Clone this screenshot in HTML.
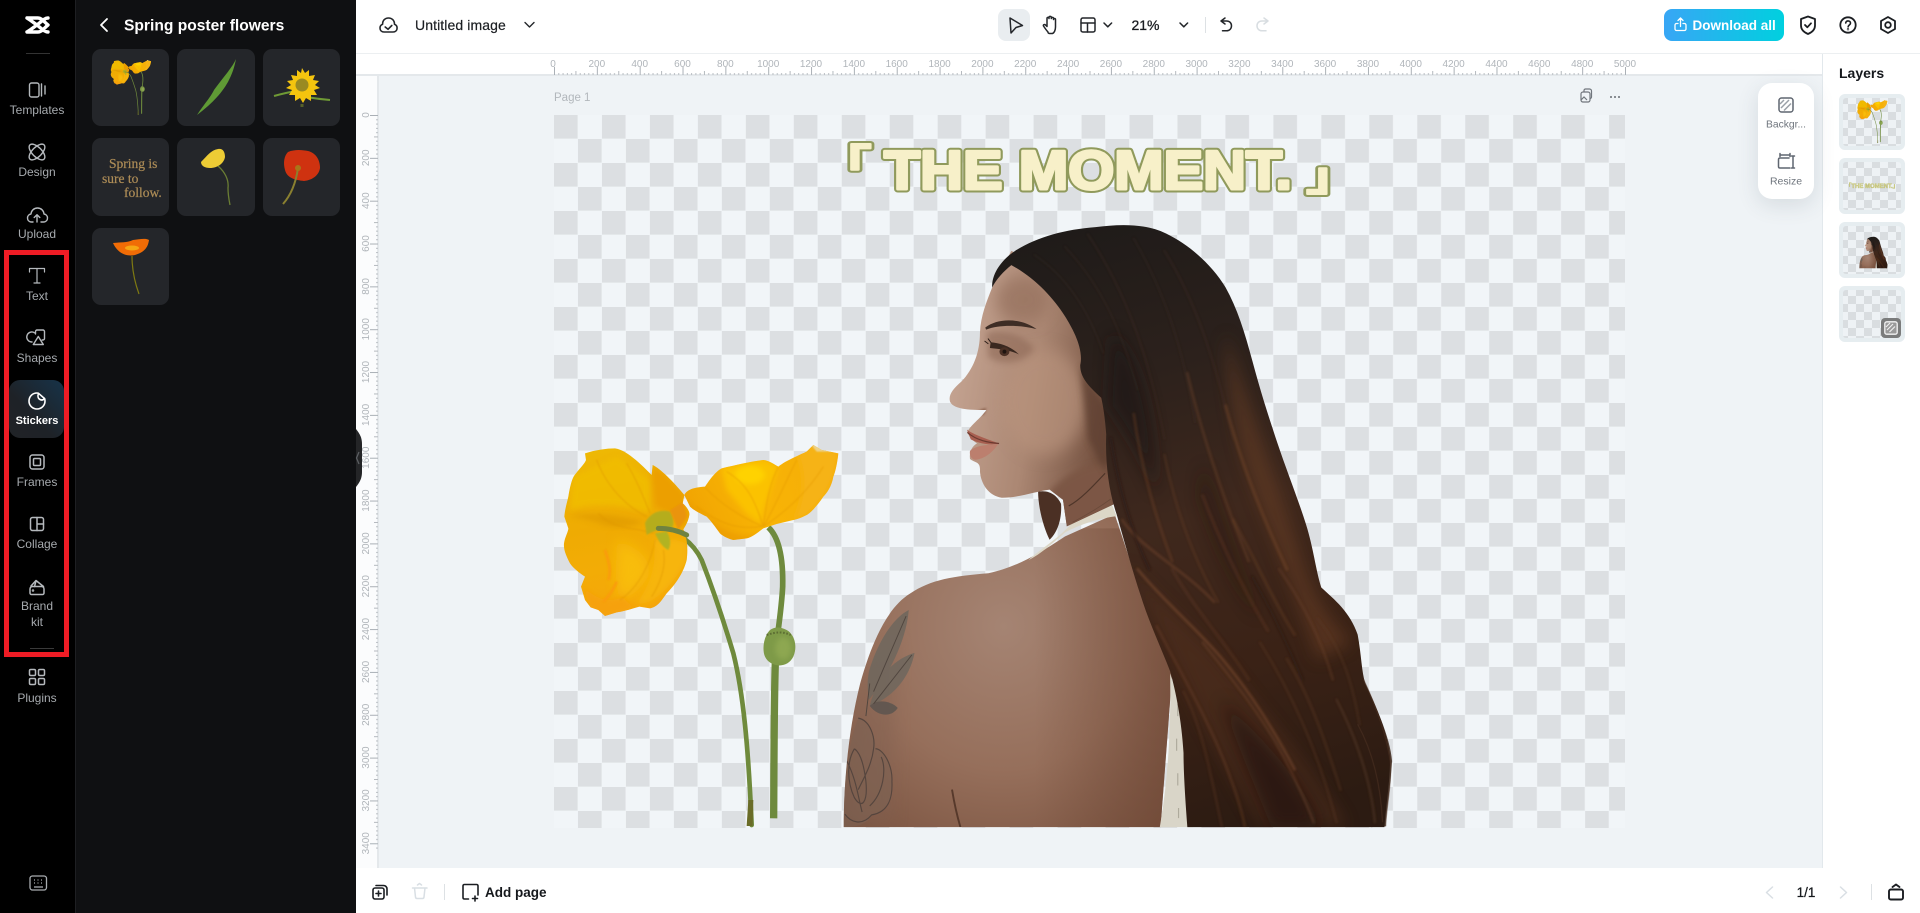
<!DOCTYPE html>
<html lang="en"><head><meta charset="utf-8"><title>Untitled image</title>
<style>
html,body{margin:0;padding:0;width:1920px;height:913px;overflow:hidden;background:#fff;font-family:"Liberation Sans","Noto Sans CJK SC",sans-serif}
.a{position:absolute}
svg text{font-family:"Liberation Sans","Noto Sans CJK SC",sans-serif}
#card{left:1758px;top:83px;width:56px;height:116px;background:#fff;border-radius:14px;box-shadow:0 6px 22px rgba(60,75,90,.14)}
</style></head><body>
<div class="a" style="left:0;top:0;width:76px;height:913px;background:#000"></div>
<div class="a" style="left:75px;top:0;width:281px;height:913px;background:#0f1012;border-left:1px solid #1e1f22;box-sizing:border-box"></div>
<div class="a" style="left:356px;top:0;width:1564px;height:53px;background:#fff;border-bottom:1px solid #eceff1"></div>
<div class="a" style="left:356px;top:54px;width:1466px;height:22px;background:#fff;border-bottom:2px solid #e4e8eb;box-sizing:border-box"></div>
<div class="a" style="left:356px;top:76px;width:23px;height:792px;background:#fbfcfd;border-right:2px solid #e4e8eb;box-sizing:border-box"></div>
<div class="a" style="left:379px;top:76px;width:1443px;height:792px;background:#eff3f6"></div>
<div class="a" style="left:1822px;top:54px;width:98px;height:814px;background:#fff;border-left:1px solid #e2e8ec;box-sizing:border-box"></div>
<div class="a" style="left:356px;top:868px;width:1564px;height:45px;background:#fff"></div>

<svg class="a" style="left:0;top:0" width="1920" height="913" viewBox="0 0 1920 913" xmlns="http://www.w3.org/2000/svg">
<defs>
<pattern id="chk" patternUnits="userSpaceOnUse" x="554" y="115" width="47.96" height="48"><rect width="48" height="48" fill="#f1f5f8"/><rect width="23.6" height="23.6" fill="#dcdfe2"/><rect x="23.98" y="24" width="23.6" height="23.6" fill="#dcdfe2"/></pattern>
<pattern id="chk2" patternUnits="userSpaceOnUse" width="16" height="16"><rect width="16" height="16" fill="#eef2f5"/><rect width="8" height="8" fill="#d9dde0"/><rect x="8" y="8" width="8" height="8" fill="#d9dde0"/></pattern>
<pattern id="tickH" patternUnits="userSpaceOnUse" x="554" y="0" width="42.84" height="76">
<rect x="0" y="67" width="1" height="8" fill="#aab0b6"/><rect x="21.42" y="71" width="1" height="4" fill="#b4b9be"/>
<rect x="4.28" y="73" width="1" height="2" fill="#b9bec3"/><rect x="8.57" y="73" width="1" height="2" fill="#b9bec3"/><rect x="12.85" y="73" width="1" height="2" fill="#b9bec3"/><rect x="17.14" y="73" width="1" height="2" fill="#b9bec3"/><rect x="25.7" y="73" width="1" height="2" fill="#b9bec3"/><rect x="29.99" y="73" width="1" height="2" fill="#b9bec3"/><rect x="34.27" y="73" width="1" height="2" fill="#b9bec3"/><rect x="38.56" y="73" width="1" height="2" fill="#b9bec3"/></pattern>
<pattern id="tickV" patternUnits="userSpaceOnUse" x="0" y="115" width="379" height="42.84">
<rect y="0" x="370" width="8" height="1" fill="#aab0b6"/><rect y="21.42" x="374" width="4" height="1" fill="#b4b9be"/>
<rect y="4.28" x="376" width="2" height="1" fill="#b9bec3"/><rect y="8.57" x="376" width="2" height="1" fill="#b9bec3"/><rect y="12.85" x="376" width="2" height="1" fill="#b9bec3"/><rect y="17.14" x="376" width="2" height="1" fill="#b9bec3"/><rect y="25.7" x="376" width="2" height="1" fill="#b9bec3"/><rect y="29.99" x="376" width="2" height="1" fill="#b9bec3"/><rect y="34.27" x="376" width="2" height="1" fill="#b9bec3"/><rect y="38.56" x="376" width="2" height="1" fill="#b9bec3"/></pattern>
<linearGradient id="dl" x1="0" x2="1" y1="0" y2="0"><stop offset="0" stop-color="#38a6f5"/><stop offset="1" stop-color="#00d0df"/></linearGradient>
<linearGradient id="act" x1="1" y1="0" x2="0" y2="1"><stop offset="0" stop-color="#173349"/><stop offset=".6" stop-color="#1e2227"/><stop offset="1" stop-color="#212327"/></linearGradient>
<linearGradient id="fL" gradientUnits="userSpaceOnUse" x1="760" y1="150" x2="860" y2="640"><stop offset="0" stop-color="#eeb804"/><stop offset=".45" stop-color="#efab03"/><stop offset=".7" stop-color="#f3ac06"/><stop offset="1" stop-color="#f5a50a"/></linearGradient>
<linearGradient id="fR" gradientUnits="userSpaceOnUse" x1="1010" y1="380" x2="1460" y2="170"><stop offset="0" stop-color="#f0a202"/><stop offset=".45" stop-color="#f8b404"/><stop offset="1" stop-color="#f5ad0a"/></linearGradient>
<linearGradient id="hairG" gradientUnits="userSpaceOnUse" x1="700" y1="40" x2="1100" y2="1512"><stop offset="0" stop-color="#1f1b19"/><stop offset=".25" stop-color="#2c211c"/><stop offset=".5" stop-color="#3f281d"/><stop offset=".75" stop-color="#3a2216"/><stop offset="1" stop-color="#2c1b12"/></linearGradient>
<radialGradient id="backG" gradientUnits="userSpaceOnUse" cx="480" cy="1020" r="640"><stop offset="0" stop-color="#a58473"/><stop offset=".55" stop-color="#966f5b"/><stop offset="1" stop-color="#7a5340"/></radialGradient>
<linearGradient id="backS" gradientUnits="userSpaceOnUse" x1="560" y1="0" x2="920" y2="0"><stop offset="0" stop-color="#6d4634" stop-opacity="0"/><stop offset="1" stop-color="#6d4634" stop-opacity=".6"/></linearGradient>
<linearGradient id="faceG" gradientUnits="userSpaceOnUse" x1="340" y1="450" x2="760" y2="520"><stop offset="0" stop-color="#c3a290"/><stop offset=".5" stop-color="#ab8773"/><stop offset="1" stop-color="#6f4c3b"/></linearGradient>
<path id="hp" d="M450 190C448 160 470 125 510 100C570 65 640 48 720 42C780 35 850 32 905 58C965 85 1025 135 1060 190C1090 240 1110 300 1130 370C1150 440 1170 500 1195 570C1220 640 1250 710 1270 770C1290 830 1295 880 1310 925C1345 955 1385 985 1405 1040C1415 1090 1415 1130 1425 1160C1455 1220 1480 1270 1490 1340C1490 1400 1480 1450 1475 1512L960 1512C955 1450 950 1380 950 1330C945 1250 930 1180 915 1130C890 1070 860 1010 840 950C815 880 795 810 775 745C755 690 745 620 748 550C745 510 740 480 735 460C700 430 680 410 680 380C690 340 660 290 640 260C610 215 560 165 500 135C480 150 460 170 450 190Z"/>
<clipPath id="hairClip"><use href="#hp"/></clipPath>
<path id="fp" d="M450 190C435 225 420 260 418 300C418 350 400 390 370 420C345 440 335 455 340 470C350 490 400 490 435 490C420 510 390 530 385 545C395 565 410 570 410 572C395 580 390 595 392 610C405 620 420 615 418 640C420 670 440 700 475 705C520 705 560 690 600 685L635 710L645 775L770 720L770 620L790 460L730 300L630 160L500 100Z"/>
<clipPath id="faceClip"><use href="#fp"/></clipPath>
<path id="bp" d="M62 1512C62 1400 75 1270 105 1160C135 1060 175 975 235 940C290 905 350 897 440 890C510 875 560 850 640 800L770 745L860 1000L920 1140L890 1512Z"/>
<clipPath id="backClip"><use href="#bp"/></clipPath>
<path id="flp" d="M705 160C735 150 770 145 795 145C830 150 870 190 905 225L908 195C930 205 970 245 1003 285L998 310C1010 320 1020 335 1018 345C1015 365 1005 380 1000 388C1012 410 1014 450 1010 480C1000 520 975 555 950 580C935 600 925 620 900 625L868 620C850 625 820 635 800 637L765 648L745 630L722 622L705 600L693 560L705 530C690 520 670 505 660 490C650 470 640 450 642 430C645 410 655 395 655 385L643 350C645 325 652 305 655 290C660 260 665 240 672 228C685 210 705 190 708 180Z"/>
<clipPath id="flc"><use href="#flp"/></clipPath>
<path id="frp" d="M1003 285C1010 270 1030 262 1065 260C1075 245 1095 215 1115 205C1160 195 1200 185 1240 180C1260 182 1275 195 1285 200C1310 180 1350 165 1370 155L1390 135L1415 150L1465 160C1462 190 1455 220 1450 230C1445 260 1430 280 1420 290C1400 320 1380 340 1370 345C1350 355 1340 358 1330 360L1280 372L1240 385C1220 400 1205 412 1190 415L1150 420C1130 415 1115 405 1110 400C1095 380 1085 365 1070 350C1050 340 1030 330 1020 320Z"/>
<clipPath id="frc"><use href="#frp"/></clipPath>
<filter id="b20" x="-30%" y="-30%" width="160%" height="160%"><feGaussianBlur stdDeviation="20"/></filter>
<filter id="b8" x="-30%" y="-30%" width="160%" height="160%"><feGaussianBlur stdDeviation="8"/></filter>
<filter id="b3" x="-20%" y="-20%" width="140%" height="140%"><feGaussianBlur stdDeviation="2.5"/></filter>

<g id="woman">
<path d="M570 690C600 685 620 700 630 720C632 750 625 785 600 808C585 780 570 730 570 690Z" fill="#4b3024"/>
<use href="#bp" fill="url(#backG)"/>
<g clip-path="url(#backClip)">
<path d="M62 1512C62 1400 75 1270 105 1160L200 1040L190 1512Z" fill="#806252" opacity=".35" filter="url(#b20)"/>
<rect x="560" y="780" width="360" height="740" fill="url(#backS)"/>
<path d="M345 1420C352 1460 360 1490 367 1512" stroke="#4a2e22" stroke-width="5" fill="none" opacity=".8"/>
<g opacity=".9">
<path d="M232 980C190 1000 150 1060 128 1130C122 1160 125 1180 128 1200C175 1145 225 1060 232 980Z" fill="#71685e"/>
<path d="M247 1085C195 1100 150 1140 130 1215C190 1195 235 1145 247 1085Z" fill="#71685e"/>
<path d="M130 1215C150 1195 190 1205 203 1220C185 1245 150 1240 130 1215Z" fill="#5f5650"/>
<path d="M120 1240L130 1160M225 995L140 1180M240 1090L140 1210" stroke="#4a423c" stroke-width="2.5" fill="none"/>
</g>
<path d="M100 1245C130 1250 145 1290 145 1320C165 1320 190 1360 188 1400C190 1440 180 1475 135 1482C120 1512 80 1512 60 1512C62 1400 75 1300 100 1245Z" fill="#7c6254" opacity=".55"/>
<path d="M100 1245C130 1250 145 1290 140 1320C135 1360 115 1390 100 1420M145 1320C165 1320 190 1360 188 1400C190 1440 180 1475 135 1482C110 1510 80 1500 65 1480M90 1320C70 1350 70 1400 90 1440C110 1470 125 1450 120 1400C115 1360 105 1330 90 1320M160 1340C175 1370 165 1430 130 1460M70 1350C95 1395 100 1440 110 1475" stroke="#4b3f39" stroke-width="3" fill="none" opacity=".8"/>
</g>
<path d="M915 1135C930 1180 950 1250 955 1330L975 1512L888 1512C905 1420 918 1300 915 1135Z" fill="#d9d5c8"/>
<path d="M935 1210v30M932 1295v30M935 1380v30M937 1465v25" stroke="#aeaa9c" stroke-width="3"/>
<path d="M545 858C570 835 630 800 655 770C690 755 740 735 760 715L775 750C730 755 680 770 640 790C610 815 585 835 560 850Z" fill="#dcd7c7"/>
<use href="#fp" fill="url(#faceG)"/>
<g clip-path="url(#faceClip)">
<ellipse cx="585" cy="470" rx="110" ry="130" fill="#b8937d" opacity=".7" filter="url(#b20)"/>
<ellipse cx="530" cy="220" rx="70" ry="60" fill="#987361" opacity=".8" filter="url(#b20)"/>
<path d="M600 690C650 640 700 620 770 620V760L645 790Z" fill="#7c5644" filter="url(#b8)"/>
<path d="M680 380L760 500L750 650L700 560Z" fill="#5e3f30" opacity=".8" filter="url(#b8)"/>
<path d="M430 500C410 510 400 490 435 485Z" fill="#8c6350" filter="url(#b3)"/>
<path d="M435 300C470 290 530 300 560 340C530 380 470 380 440 360Z" fill="#8a6552" opacity=".55" filter="url(#b8)"/>
</g>
<path d="M432 288C465 264 525 264 566 292C525 282 470 280 434 293Z" fill="#3e2d25"/>
<path d="M446 324C470 326 500 334 520 354C500 344 470 340 444 338Z" fill="#3a2820"/>
<ellipse cx="482" cy="347" rx="13" ry="11" fill="#4a3025"/>
<ellipse cx="482" cy="347" rx="5" ry="5" fill="#1f1410"/>
<path d="M440 328l-10-7M447 325l-8-10" stroke="#2b1d17" stroke-width="2.500"/>
<path d="M384 538C400 550 440 562 468 572C440 578 410 570 394 562Z" fill="#a85f50"/>
<path d="M392 590C410 575 440 576 466 573C450 595 430 610 405 612C395 610 390 600 392 590Z" fill="#bc7f6e"/>
<path d="M385 545C410 565 440 570 468 572" stroke="#6b3a30" stroke-width="3" fill="none"/>
<path d="M745 645C710 680 680 710 650 725" stroke="#4e3529" stroke-width="3" fill="none"/>
<path d="M760 708C720 735 690 750 660 765" stroke="#6a4a3a" stroke-width="2" fill="none"/>
<path d="M1415 1140C1450 1210 1490 1290 1495 1350C1490 1420 1480 1470 1478 1510L1440 1512L1400 1300Z" fill="#3a2518" opacity=".85"/>
<use href="#hp" fill="url(#hairG)"/>
<g clip-path="url(#hairClip)">
<path d="M1060 300C1120 480 1200 680 1260 860C1290 950 1330 1000 1390 1060L1300 1100C1260 980 1180 800 1110 620C1080 520 1060 400 1060 300Z" fill="#6a3f27" opacity=".55" filter="url(#b20)"/>
<path d="M800 860C880 960 1010 1040 1100 1160C1200 1280 1300 1380 1380 1512L1150 1512C1080 1400 980 1230 900 1060C870 1000 830 920 800 860Z" fill="#5a3421" opacity=".45" filter="url(#b20)"/>
<path d="M760 300C830 340 880 500 880 700C860 640 800 540 750 480Z" fill="#1a1512" opacity=".6" filter="url(#b20)"/>
<path d="M1000 620C1060 780 1100 900 1150 1000C1100 960 1030 820 990 700Z" fill="#241810" opacity=".45" filter="url(#b20)"/>
<path d="M1050 1200C1150 1290 1250 1380 1310 1512L1180 1512C1140 1420 1090 1310 1050 1200Z" fill="#1b110b" opacity=".55" filter="url(#b20)"/>
<g fill="none" stroke-linecap="round" filter="url(#b3)">
<path d="M700 60C800 200 860 360 900 560" stroke="#4f3a2f" stroke-width="6" opacity=".2"/>
<path d="M640 90C740 190 790 300 830 440" stroke="#4b362c" stroke-width="5" opacity=".2"/>
<path d="M820 70C900 200 950 340 980 520" stroke="#45342b" stroke-width="6" opacity=".2"/>
<path d="M900 100C980 220 1030 360 1080 560" stroke="#4c3428" stroke-width="7" opacity=".2"/>
<path d="M560 110C640 160 700 240 740 350" stroke="#4f3c32" stroke-width="5" opacity=".18"/>
<path d="M820 500C840 640 880 760 920 860" stroke="#7a482c" stroke-width="7" opacity=".35"/>
<path d="M960 400C1000 560 1060 720 1120 860" stroke="#7a4a2e" stroke-width="7" opacity=".35"/>
<path d="M1060 480C1100 620 1160 760 1220 880" stroke="#88502f" stroke-width="8" opacity=".35"/>
<path d="M900 600C930 740 980 860 1040 960" stroke="#6e4128" stroke-width="6" opacity=".35"/>
<path d="M790 760C840 830 950 880 1030 960" stroke="#7c4a30" stroke-width="7" opacity=".4"/>
<path d="M830 880C900 960 1000 1040 1060 1110C1130 1190 1190 1280 1240 1370" stroke="#8a5433" stroke-width="7" opacity=".45"/>
<path d="M1000 1060C1060 1130 1140 1220 1200 1320C1240 1390 1270 1450 1290 1500" stroke="#7b4a2d" stroke-width="6" opacity=".4"/>
<path d="M880 1020C940 1130 1010 1240 1060 1360C1080 1410 1100 1460 1110 1510" stroke="#6f4229" stroke-width="7" opacity=".4"/>
<path d="M950 1180C1000 1270 1020 1380 1050 1510" stroke="#5e3822" stroke-width="6" opacity=".4"/>
<path d="M1200 880C1260 960 1310 1050 1340 1150" stroke="#6c422a" stroke-width="7" opacity=".35"/>
<path d="M1300 1000C1360 1070 1390 1150 1410 1260" stroke="#5a3722" stroke-width="6" opacity=".4"/>
<path d="M1150 1060C1230 1180 1300 1320 1350 1500" stroke="#5c3722" stroke-width="6" opacity=".4"/>
<path d="M1350 1200C1400 1290 1440 1400 1450 1500" stroke="#60402b" stroke-width="6" opacity=".45"/>
<path d="M760 560C780 680 810 780 860 880" stroke="#2a1a13" stroke-width="8" opacity=".5"/>
<path d="M1130 900C1180 980 1220 1060 1260 1150" stroke="#2a1a12" stroke-width="8" opacity=".4"/>
<path d="M1000 700C1040 800 1100 920 1170 1030" stroke="#663c26" stroke-width="8" opacity=".35"/>
<path d="M1080 760C1140 860 1180 950 1240 1040" stroke="#734528" stroke-width="8" opacity=".3"/>
<path d="M920 880C980 980 1060 1060 1120 1150" stroke="#6b3f27" stroke-width="8" opacity=".3"/>
<path d="M1220 1100C1280 1190 1320 1300 1360 1420" stroke="#6b4229" stroke-width="7" opacity=".3"/>
</g>
</g>
<path d="M1420 1150C1455 1220 1480 1285 1490 1350C1495 1400 1480 1460 1478 1510M1405 1260C1440 1320 1465 1400 1470 1500" stroke="#4a3022" stroke-width="3" fill="none" opacity=".7"/>
</g>

<g id="flowers">
<path d="M925 385C990 395 1030 430 1055 480C1090 570 1120 660 1150 760C1180 880 1195 1040 1205 1275" stroke="#6f8a3c" stroke-width="14" fill="none" stroke-linecap="round"/>
<path d="M1195 1200L1210 1200L1208 1278L1190 1278Z" fill="#6a6c28"/>
<path d="M1255 382C1285 410 1300 470 1298 560C1296 600 1290 650 1284 695" stroke="#6e8a3d" stroke-width="17" fill="none"/>
<path d="M1276 790C1272 900 1272 1100 1271 1255" stroke="#6e8a3d" stroke-width="22" fill="none"/>
<use href="#frp" fill="url(#fR)"/>
<g clip-path="url(#frc)">
<path d="M1115 205L1240 180L1285 200L1240 330L1230 370L1190 340L1130 270Z" fill="#fbc203" filter="url(#b8)"/>
<ellipse cx="1200" cy="225" rx="45" ry="28" fill="#ffd500" opacity=".85" filter="url(#b8)"/>
<path d="M1340 160L1390 135L1465 160L1450 230L1420 290L1370 345L1330 360C1360 300 1370 230 1340 160Z" fill="#f6b312" filter="url(#b8)"/>
<path d="M1380 130L1415 130L1445 155L1400 155Z" fill="#ecd28a" filter="url(#b3)"/>
<path d="M1240 380C1270 330 1300 260 1340 180M1240 380C1300 340 1370 280 1420 200M1240 380C1215 300 1190 250 1130 215M1240 380C1170 350 1110 310 1065 262M1240 378C1180 390 1120 380 1040 320M1240 380C1250 300 1260 250 1285 200" stroke="#e59a00" stroke-width="3" fill="none" opacity=".55" filter="url(#b3)"/>
<path d="M1240 400C1190 420 1100 400 1010 300L1000 420L1240 440Z" fill="#e89500" opacity=".5" filter="url(#b8)"/>
</g>
<use href="#flp" fill="url(#fL)"/>
<g clip-path="url(#flc)">
<path d="M670 230L800 170L900 240L900 340C830 320 750 300 660 330Z" fill="#f0bd03" opacity=".85" filter="url(#b8)"/>
<path d="M650 350C730 330 820 350 880 365C840 385 780 385 750 370C720 360 680 350 650 350Z" fill="#dd9700" opacity=".6" filter="url(#b8)"/>
<path d="M905 225L910 195L950 225L1005 285L1000 310L1018 340L1000 385L960 340L915 320Z" fill="#ec9f06" filter="url(#b8)"/>
<path d="M910 420C925 500 890 570 860 610C900 620 960 570 1010 480L1010 430L980 420Z" fill="#f7b509" filter="url(#b8)"/>
<path d="M800 420C860 440 900 470 900 520C880 560 850 590 810 600C790 540 800 480 800 420Z" fill="#f9c107" opacity=".8" filter="url(#b20)"/>
<path d="M700 560C740 600 780 610 820 590C830 610 850 620 860 620L770 650L720 625Z" fill="#f6a10a" filter="url(#b8)"/>
<path d="M765 450C775 480 785 510 775 540M800 545C790 570 775 590 760 605" stroke="#fa9a0e" stroke-width="9" fill="none" opacity=".8" filter="url(#b3)"/>
<path d="M915 420C905 480 870 560 810 600M910 400C850 380 790 390 745 340M890 350C830 320 770 260 740 180M900 340C880 290 860 240 830 190M940 450C950 500 930 550 905 590" stroke="#de9600" stroke-width="3" fill="none" opacity=".55" filter="url(#b3)"/>
<path d="M885 370C895 345 925 325 960 335C975 360 975 390 950 395C930 385 905 395 890 405Z" fill="#b5ad1f" filter="url(#b3)"/>
<path d="M915 400C925 420 935 440 955 450C965 430 960 410 950 395Z" fill="#b2b321" filter="url(#b3)"/>
<path d="M960 330L1000 305L1010 350L985 390Z" fill="#ea9408" filter="url(#b3)"/>
</g>
<path d="M925 385C960 385 985 392 1010 405" stroke="#6f8240" stroke-width="15" fill="none" stroke-linecap="round"/>
<path d="M1260 690C1240 710 1236 750 1245 770C1258 800 1310 810 1330 770C1345 735 1330 700 1310 690C1290 680 1275 680 1260 690Z" fill="#7e9a48"/>
<path d="M1250 705C1280 695 1300 695 1322 705" stroke="#5c6d33" stroke-width="6" fill="none" stroke-dasharray="5 5"/>
<ellipse cx="1300" cy="745" rx="24" ry="34" fill="#94ad55" opacity=".7" filter="url(#b8)"/>
</g>
</defs>

<!-- checker page -->
<rect x="554" y="115" width="1071" height="713" fill="url(#chk)"/>
<!-- rulers -->
<rect x="554" y="60" width="1072" height="16" fill="url(#tickH)"/>
<rect x="360" y="115" width="19" height="736" fill="url(#tickV)"/>
<g font-size="10" fill="#b0b5ba" text-anchor="middle">
<text x="553" y="67">0</text><text x="596.8" y="67">200</text><text x="639.7" y="67">400</text><text x="682.5" y="67">600</text><text x="725.4" y="67">800</text><text x="768.2" y="67">1000</text><text x="811" y="67">1200</text><text x="853.9" y="67">1400</text><text x="896.7" y="67">1600</text><text x="939.6" y="67">1800</text><text x="982.4" y="67">2000</text><text x="1025.2" y="67">2200</text><text x="1068.1" y="67">2400</text><text x="1110.9" y="67">2600</text><text x="1153.8" y="67">2800</text><text x="1196.6" y="67">3000</text><text x="1239.4" y="67">3200</text><text x="1282.3" y="67">3400</text><text x="1325.1" y="67">3600</text><text x="1368" y="67">3800</text><text x="1410.8" y="67">4000</text><text x="1453.6" y="67">4200</text><text x="1496.5" y="67">4400</text><text x="1539.3" y="67">4600</text><text x="1582.2" y="67">4800</text><text x="1625" y="67">5000</text>
<text transform="translate(369,115) rotate(-90)">0</text><text transform="translate(369,157.8) rotate(-90)">200</text><text transform="translate(369,200.7) rotate(-90)">400</text><text transform="translate(369,243.5) rotate(-90)">600</text><text transform="translate(369,286.4) rotate(-90)">800</text><text transform="translate(369,329.2) rotate(-90)">1000</text><text transform="translate(369,372) rotate(-90)">1200</text><text transform="translate(369,414.9) rotate(-90)">1400</text><text transform="translate(369,457.7) rotate(-90)">1600</text><text transform="translate(369,500.6) rotate(-90)">1800</text><text transform="translate(369,543.4) rotate(-90)">2000</text><text transform="translate(369,586.2) rotate(-90)">2200</text><text transform="translate(369,629.1) rotate(-90)">2400</text><text transform="translate(369,671.9) rotate(-90)">2600</text><text transform="translate(369,714.8) rotate(-90)">2800</text><text transform="translate(369,757.6) rotate(-90)">3000</text><text transform="translate(369,800.4) rotate(-90)">3200</text><text transform="translate(369,843.3) rotate(-90)">3400</text>
</g>
<text x="554" y="101" font-size="11.5" fill="#b2b7bc">Page 1</text>
<g fill="none" stroke="#71767d" stroke-width="1.2"><rect x="1581" y="92" width="9" height="10" rx="2"/><path d="M1584 92v-1.500a1.500 1.500 0 0 1 1.500-1.500h4a2 2 0 0 1 2 2v6a1.500 1.500 0 0 1-1.500 1.500"/><path d="M1581 100l3-3 3 3"/></g>
<circle cx="1611" cy="97" r="1" fill="#686d73"/><circle cx="1615" cy="97" r="1" fill="#686d73"/><circle cx="1619" cy="97" r="1" fill="#686d73"/>

<!-- canvas photos -->
<g transform="translate(350,400) scale(.33333)"><use href="#flowers"/></g>
<g transform="translate(820,210) scale(.38265,.40816)"><use href="#woman"/></g>

<!-- moment title -->
<g font-weight="bold" stroke-linejoin="round" stroke-linecap="round">
<g fill="#909a5c" stroke="#909a5c" stroke-width="7">
<text x="884" y="189" font-size="55" textLength="408" lengthAdjust="spacingAndGlyphs">THE MOMENT.</text>
<text transform="translate(815.700,178) scale(1.4,1)" font-size="40" stroke-width="6" style="font-family:'Noto Sans CJK SC',sans-serif">「</text>
<text transform="translate(1306,190) scale(1.4,1)" font-size="40" stroke-width="6" style="font-family:'Noto Sans CJK SC',sans-serif">」</text>
</g>
<g fill="#f7f0c9" stroke="#f7f0c9" stroke-width="3">
<text x="884" y="189" font-size="55" textLength="408" lengthAdjust="spacingAndGlyphs">THE MOMENT.</text>
<text transform="translate(815.700,178) scale(1.4,1)" font-size="40" stroke-width="2" style="font-family:'Noto Sans CJK SC',sans-serif">「</text>
<text transform="translate(1306,190) scale(1.4,1)" font-size="40" stroke-width="2" style="font-family:'Noto Sans CJK SC',sans-serif">」</text>
</g>
</g>

<!-- collapse handle -->
<path d="M356 429C360 434 362 438 362 444V472C362 478 360 482 356 487Z" fill="#242527"/>
<path d="M359 452l-2.500 6 2.500 6" stroke="#5c5f63" stroke-width="1.300" fill="none"/>

<!-- NAV -->
<g fill="none" stroke="#fff" stroke-width="3.400" stroke-linecap="round" stroke-linejoin="round"><path d="M27 18H38C42 18 44 22 48 25C44 28 42 32 38 32H27M48 18C45 18 43 20 37 25C43 30 45 32 48 32M27 18C32 21 34 23 37 25C34 27 32 29 27 32"/></g>
<rect x="26" y="53" width="24" height="1" fill="#333"/>
<g fill="none" stroke="#b5b9bd" stroke-width="1.400" stroke-linecap="round" stroke-linejoin="round">
<rect x="29.500" y="83" width="9.500" height="14" rx="2"/><path d="M41.500 84v12M45 86v8"/>
<ellipse cx="37" cy="152" rx="10" ry="4.800" transform="rotate(45 37 152)"/>
<ellipse cx="37" cy="152" rx="10" ry="4.800" transform="rotate(-45 37 152)"/>
<path d="M33 222h-1.500c-2.500 0-4-1.800-4-4 0-2.200 1.500-3.700 3.500-4 .3-3.500 3-6 6.500-6s6.200 2.500 6.500 6c2 .3 3.500 1.800 3.500 4 0 2.200-1.500 4-4 4H41M37 222v-7M34.200 217.500l2.800-2.800 2.800 2.800"/>
<path d="M34.500 332.800a5 5 0 1 0-2.500 9.200M35.500 334v-2.500c0-.8.700-1.500 1.500-1.500h6c.8 0 1.500.7 1.500 1.500v7c0 .8-.7 1.500-1.500 1.500h-.8M38.300 336.500l5 8h-10z"/>
</g>
<g fill="none" stroke="#b5b9bd" stroke-width="1.200" stroke-linecap="round" stroke-linejoin="round"><path d="M29.500 272v-3.500h15v3.500M37 268.500v14.500M34 283h6"/></g>
<g fill="none" stroke="#b5b9bd" stroke-width="1.500" stroke-linecap="round" stroke-linejoin="round">
<rect x="30" y="455" width="14" height="14" rx="2.500"/><rect x="33.500" y="458.500" width="7" height="7" rx="1"/>
<rect x="30.500" y="517.500" width="13" height="13" rx="2"/><path d="M37 517.500v13M37 524h6.500"/>
<path d="M30 593v-4c0-1.500 1-2.500 2.500-2.500h9c1.500 0 2.500 1 2.500 2.500v4c0 .8-.7 1.500-1.500 1.500h-11c-.8 0-1.500-.7-1.500-1.500zM31 586l5-5.500 7.500 6"/><path d="M36 581l-1.500 5.500"/><circle cx="33" cy="590.500" r=".5"/>
<rect x="29.500" y="669.500" width="6" height="6" rx="1.300"/><rect x="38.500" y="669.500" width="6" height="6" rx="1.300"/><rect x="29.500" y="678.500" width="6" height="6" rx="1.300"/><rect x="38.500" y="678.500" width="6" height="6" rx="1.300"/>
</g>
<rect x="30" y="648" width="24" height="1" fill="#3a3a3a"/>
<g fill="none" stroke="#a9adb1" stroke-width="1.300"><rect x="30" y="876" width="16.500" height="14" rx="2.500"/><path d="M34 887h9" stroke-width="1.300"/><path d="M34 880h1M37.500 880h1M41 880h1M34 883h1M37.500 883h1M41 883h1"/></g>
<rect x="9" y="380" width="55" height="58" rx="11" fill="url(#act)"/>
<g fill="none" stroke="#fff" stroke-width="1.600" stroke-linecap="round" stroke-linejoin="round"><path d="M37 393c-4.500 0-8 3.500-8 8s3.500 8 8 8 8-3.500 8-8c0-1-.2-1.800-.5-2.500l-6-5.200c-.5-.2-1-.3-1.500-.3z"/><path d="M38.500 393.500c-1 2.500-.5 5 1.500 6s3.500 .3 4.500-1"/></g>
<g font-size="12" fill="#a6aaae" text-anchor="middle">
<text x="37" y="114">Templates</text><text x="37" y="176">Design</text><text x="37" y="238">Upload</text><text x="37" y="300">Text</text><text x="37" y="362">Shapes</text><text x="37" y="424" fill="#fff" font-weight="bold" font-size="11">Stickers</text><text x="37" y="486">Frames</text><text x="37" y="548">Collage</text><text x="37" y="610">Brand</text><text x="37" y="626">kit</text><text x="37" y="702">Plugins</text>
</g>
<path d="M4 250H69V657H4Z M9 255V652H64V255Z" fill="#ee1c25" fill-rule="evenodd"/>

<!-- panel -->
<path d="M107 19l-6 6 6 6" fill="none" stroke="#fff" stroke-width="1.800" stroke-linecap="round" stroke-linejoin="round"/>
<text x="124" y="30.500" font-size="15.600" font-weight="bold" fill="#fff">Spring poster flowers</text>
<g fill="#24262a"><rect x="92" y="49" width="77" height="77" rx="9"/><rect x="177" y="49" width="78" height="77" rx="9"/><rect x="263" y="49" width="77" height="77" rx="9"/><rect x="92" y="138" width="77" height="78" rx="9"/><rect x="177" y="138" width="78" height="78" rx="9"/><rect x="263" y="138" width="77" height="78" rx="9"/><rect x="92" y="228" width="77" height="77" rx="9"/></g>
<g transform="translate(79.300,53.500) scale(.049,.048)"><use href="#flowers"/></g>
<path d="M236 59C232 80 222 96 197 115C205 103 210 98 214 90C224 76 232 68 236 59Z" fill="#5f9a35"/>
<path d="M274 96C285 93 290 92 296 91M330 100C318 99 312 98 306 97" stroke="#6f9a35" stroke-width="2" fill="none"/>
<path d="M302 68l3 5 4-3 0 6 6-1-2 5 6 1-4 4 5 3-6 2 3 5-6 0 0 6-5-3-3 5-3-5-5 3 0-6-6 0 3-5-6-2 5-3-4-4 6-1-2-5 6 1 0-6 4 3z" fill="#f4c40e"/>
<circle cx="302" cy="85" r="6.500" fill="#9a8a22"/>
<path d="M302 104v3" stroke="#56602a" stroke-width="3"/>
<g font-size="13.500" fill="#ae8d57" stroke="#ae8d57" stroke-width=".2">
<text x="109" y="168" style="font-family:'Liberation Serif',serif">Spring is</text><text x="102" y="183" style="font-family:'Liberation Serif',serif">sure to</text><text x="124" y="197" style="font-family:'Liberation Serif',serif">follow.</text></g>
<path d="M201 162C207 156 211 150 218 149C223 148 225 152 225 157C224 163 218 168 210 168C205 168 201 166 201 162Z" fill="#edcc35"/>
<path d="M218 166C225 172 229 180 228 188C228 195 229 200 230 205" stroke="#6a7d34" stroke-width="1.300" fill="none"/>
<path d="M288 152C295 149 303 150 308 151C316 153 320 160 320 168C319 175 313 180 304 181C295 180 287 178 285 170C283 163 284 156 288 152Z" fill="#cf3210"/>
<path d="M298 168C296 182 291 195 283 204" stroke="#8a8030" stroke-width="2" fill="none"/>
<circle cx="298" cy="168" r="3" fill="#a8761a"/>
<path d="M113 243C122 242 126 243 133 240C140 239 146 238 149 240C148 247 145 252 135 255C125 257 117 252 113 243Z" fill="#f06c06"/>
<ellipse cx="132" cy="248" rx="7" ry="2.500" fill="#f5a614"/>
<path d="M132 256C132 270 135 283 139 294" stroke="#7f7a12" stroke-width="1.200" fill="none"/>

<!-- top bar -->
<g fill="none" stroke="#23262a" stroke-width="1.600" stroke-linecap="round" stroke-linejoin="round">
<path d="M384 32c-2.500 0-4-1.800-4-4 0-1.800 1-3.200 2.600-3.800C382.500 20.500 385 18 388.500 18s6 2.500 6 6.200c1.600.6 2.600 2 2.600 3.800 0 2.200-1.500 4-4 4z"/><path d="M385.200 27l2.800 2.300 3.800-3.800"/>
</g>
<path d="M525 22.500l4.500 4.500 4.500-4.500" fill="none" stroke="#23262a" stroke-width="1.400" stroke-linecap="round" stroke-linejoin="round"/>
<text x="415" y="30" font-size="14" fill="#1b1e22" stroke="#1b1e22" stroke-width=".2" style="letter-spacing:.1px">Untitled image</text>
<rect x="998" y="9" width="32" height="32" rx="8" fill="#e9edf0"/>
<g fill="none" stroke="#23262a" stroke-width="1.500" stroke-linecap="round" stroke-linejoin="round">
<path d="M1010 18L1022.500 25.500L1016 27.500L1011 33Z"/>
<path d="M1048 32c-1.500-1.500-3.500-4.500-4.500-6-.7-1.200 1-2 2-1l1.500 1.500v-8c0-1.500 2-1.500 2 0v-1c0-1.500 2.300-1.500 2.300 0v1c0-1.500 2.200-1.500 2.200 0v1c0-1.400 2-1.400 2 0v7.500c0 3.500-1.500 6-3 6.500h-3c-.7 0-1.500-.7-1.500-1z"/>
<rect x="1081" y="18" width="14" height="14" rx="1.800"/><path d="M1081 23h14M1087.500 23v9"/>
<path d="M1104 23l3.800 3.800 3.800-3.800M1180 23l3.800 3.800 3.800-3.800"/>
<path d="M1225 18l-4 3 4 3M1221 21h5.500c3 0 5 2 5 4.800s-2 5-5 5h-4"/>
</g>
<g fill="none" stroke="#d8dde1" stroke-width="1.500" stroke-linecap="round" stroke-linejoin="round"><path d="M1264 18l4 3-4 3M1268 21h-6c-3 0-5 2-5 4.800s2 5 5 5h4"/></g>
<rect x="1205" y="17" width="1" height="16" fill="#dde1e4"/>
<text x="1145.500" y="30" font-size="14" fill="#1b1e22" stroke="#1b1e22" stroke-width=".3" text-anchor="middle">21%</text>
<rect x="1664" y="9" width="120" height="32" rx="8" fill="url(#dl)"/>
<g fill="none" stroke="#fff" stroke-width="1.300" stroke-linecap="round" stroke-linejoin="round"><path d="M1678 23.500h-1.500c-.8 0-1.500.7-1.500 1.500v4c0 .8.700 1.500 1.500 1.500h8c.8 0 1.500-.7 1.500-1.500v-4c0-.8-.7-1.500-1.500-1.500H1683M1680.500 26.500v-8M1678 20.500l2.500-2.500 2.500 2.500"/></g>
<text x="1692.500" y="30" font-size="13.500" font-weight="bold" fill="#fff">Download all</text>
<g fill="none" stroke="#1b1e22" stroke-width="1.800" stroke-linecap="round" stroke-linejoin="round">
<path d="M1808 16.500l7 2.500v6.500c0 4-3 6.800-7 8.500-4-1.700-7-4.500-7-8.500V19z"/><path d="M1805 25l2.300 2.300 3.700-4"/>
<circle cx="1848" cy="25" r="7.700"/><path d="M1845.700 23c.2-1.400 1.200-2.100 2.400-2.100 1.300 0 2.400 .9 2.400 2.200 0 1.800-2.400 2-2.400 3.800" stroke-width="1.600"/><circle cx="1848" cy="29.200" r=".3"/>
<path d="M1888 17l7 4v8l-7 4-7-4v-8z"/><circle cx="1888" cy="25" r="2.800"/>
</g>

<!-- layers -->
<text x="1839" y="78" font-size="14" font-weight="bold" fill="#15181c">Layers</text>
<g fill="#e6edf0"><rect x="1839" y="94" width="66" height="56" rx="6"/><rect x="1839" y="158" width="66" height="56" rx="6"/><rect x="1839" y="222" width="66" height="56" rx="6"/><rect x="1839" y="286" width="66" height="56" rx="6"/></g>
<g fill="url(#chk2)"><rect x="1843" y="98" width="58" height="48" rx="3"/><rect x="1843" y="162" width="58" height="48" rx="3"/><rect x="1843" y="226" width="58" height="48" rx="3"/><rect x="1843" y="290" width="58" height="48" rx="3"/></g>
<g transform="translate(1833.900,94.900) scale(.0365,.0376)"><use href="#flowers"/></g>
<text x="1872" y="188" font-size="6" font-weight="bold" fill="#dcd8a0" text-anchor="middle" stroke="#b5b65e" stroke-width=".3">「THE MOMENT.」</text>
<g transform="translate(1858.100,235.950) scale(.0196,.0214)"><use href="#woman"/></g>
<rect x="1881" y="318" width="20" height="20" rx="4" fill="#7b7c7c"/>
<g transform="translate(1884,321)"><rect x=".8" y=".8" width="12.400" height="12.400" rx="2" fill="#9a9a9a" stroke="#f4f4f4" stroke-width="1.300"/><path d="M3 9L9 3M5.500 11L11 5.500M2 6L6 2" stroke="#eee" stroke-width="1.200"/></g>

<!-- bottom -->
<g fill="none" stroke="#1b1e22" stroke-width="1.600" stroke-linecap="round" stroke-linejoin="round">
<rect x="373" y="888" width="11" height="11" rx="2"/><path d="M378.500 891v5M376 893.500h5"/><path d="M376 885.500h7.500c2 0 3.500 1.500 3.500 3.500v6"/>
<path d="M468.500 899h-4c-1 0-1.500-.6-1.500-1.500V886c0-1 .6-1.500 1.500-1.500h12c1 0 1.500.6 1.500 1.500v9M475 896v5M472.500 898.500h5"/>
</g>
<g fill="none" stroke="#d9dfe4" stroke-width="1.500" stroke-linecap="round" stroke-linejoin="round">
<path d="M412.500 888h14.500M414.500 888l1 9c.1 1 .7 1.500 1.500 1.500h5.500c.8 0 1.400-.5 1.500-1.500l1-9M417.500 885l2-1.500 2 1.500"/>
<path d="M1772.500 887l-6 5.500 6 5.500"/><path d="M1840.500 887l6 5.500-6 5.500"/>
</g>
<rect x="444" y="884" width="1" height="16" fill="#dde1e4"/>
<rect x="1871" y="884" width="1" height="16" fill="#dde1e4"/>
<text x="485" y="897" font-size="13.500" font-weight="bold" fill="#15181c">Add page</text>
<text x="1806" y="897" font-size="13.500" fill="#15181c" text-anchor="middle" stroke="#15181c" stroke-width=".25">1/1</text>
<g fill="none" stroke="#1b1e22" stroke-width="1.900" stroke-linecap="round" stroke-linejoin="round"><rect x="1889" y="889.500" width="14" height="10" rx="1.800"/><path d="M1892.500 887l3.500-2.500 3.500 2.500"/></g>
</svg>

<div id="card" class="a"></div>
<svg class="a" style="left:1758px;top:83px" width="56" height="116" viewBox="0 0 56 116" xmlns="http://www.w3.org/2000/svg">
<g fill="none" stroke="#5f6670" stroke-width="1.500"><rect x="21" y="15" width="14" height="14" rx="2.500"/><path d="M23 25l8-8M26 27.500l7-7M22 21l4-4" stroke-width="1.500" stroke="#9aa0a8"/>
<path d="M31 75h-9c-1 0-1.500.6-1.500 1.500v7c0 1 .6 1.500 1.500 1.500h10" stroke-linecap="round"/><path d="M22 72h10M22 70.500v3M32 70.500v3M35 73v12M33.500 73h3M33.500 85h3" stroke-linecap="round"/></g>
<text x="28" y="44.500" font-size="10.300" fill="#6e747c" text-anchor="middle" style="font-family:'Liberation Sans',sans-serif">Backgr...</text>
<text x="28" y="101.500" font-size="10.500" fill="#6e747c" text-anchor="middle" style="font-family:'Liberation Sans',sans-serif">Resize</text>
</svg>
</body></html>
